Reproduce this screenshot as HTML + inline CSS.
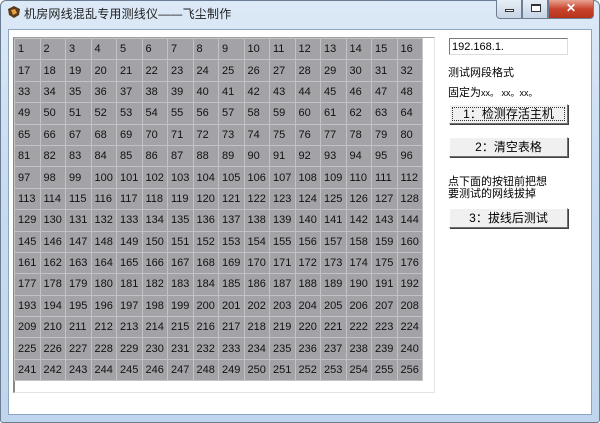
<!DOCTYPE html>
<html><head><meta charset="utf-8"><style>
*{margin:0;padding:0;box-sizing:border-box}
body{width:600px;height:423px;overflow:hidden;background:#fff;font-family:"Liberation Sans","Noto Sans CJK SC",sans-serif;position:relative}
.frame{position:absolute;left:0;top:0;width:600px;height:423px;background:linear-gradient(#dce9f7,#c9dcf1 40%,#c0d6ee);border:1px solid #6b7d92;border-radius:6px 6px 3px 3px}
.title{position:absolute;left:24px;top:5px;font-size:12px;color:#1e1e1e;letter-spacing:0.2px}
.client{position:absolute;left:8px;top:29px;width:584px;height:386px;background:#fff;border:1px solid #8fa6bf}
.btns{position:absolute;right:6px;top:0;height:19px;display:flex}
.b{height:19px;border:1px solid #6e7e93;border-top:none;background:linear-gradient(#e8eef6,#c7d5e6);position:relative}
.cls{background:linear-gradient(#e8a393,#c8442c 50%,#b6321c);width:46px;border-radius:0 0 4px 0;color:#fff;font-weight:bold;font-size:12px;text-align:center;line-height:17px}
.panel{position:absolute;left:13px;top:37px;width:422px;height:356px;border-left:2px solid #8a8a8a;border-top:1px solid #a0a0a0;border-bottom:1px solid #e4e4e4;border-right:1px solid #e4e4e4}
table{position:absolute;left:14px;top:38px;border-collapse:collapse;width:409px;height:343px;background:#a3a2a6}
td{border:1px solid #c3c3c6;font-size:11px;color:#111;padding:0 0 0 3px;vertical-align:middle;width:25.5px;height:21.4px}
.t{position:absolute;font-size:11px;color:#000}
.inp{position:absolute;left:449px;top:38px;width:119px;height:17px;border:1px solid #7a7a7a;border-right-color:#ddd;border-bottom-color:#ddd;font-size:11px;padding:2px 2px;color:#000}
.btn{position:absolute;left:449px;width:119px;height:20px;border:1px solid #707070;border-left-color:#fff;border-top-color:#fff;box-shadow:1px 1px 0 #404040;background:#f0f0f0;font-size:12px;text-align:center;line-height:18px}
</style></head><body>
<div class="frame"></div>
<svg style="position:absolute;left:6px;top:5px" width="16" height="14"><path d="M2 4 L8 1 L14 4 L13 10 L8 13 L3 10Z" fill="#5a3a1a"/><path d="M5 5 L9 4 L11 8 L7 10Z" fill="#e8a040"/></svg>
<div class="title">机房网线混乱专用测线仪——飞尘制作</div>
<div class="btns"><div class="b" style="width:26px;border-radius:0 0 0 4px"><div style="position:absolute;left:8px;top:9px;width:9px;height:3px;border:1px solid #333;background:#fff"></div></div><div class="b" style="width:26px"><div style="position:absolute;left:8px;top:4px;width:10px;height:8px;border:1px solid #333;border-top-width:2px;background:#fff"></div></div><div class="b cls">✕</div></div>
<div class="client"></div>
<div class="panel"></div>
<table>
<tbody id="g"></tbody>
</table>
<div class="inp">192.168.1.</div>
<div class="t" style="left:448px;top:64px">测试网段格式</div>
<div class="t" style="left:448px;top:84px">固定为<span style="font-size:9px">xx。 xx。xx。</span></div>
<div class="btn" style="top:104px;outline:1px dotted #333;outline-offset:-4px">1：检测存活主机</div>
<div class="btn" style="top:137px">2：清空表格</div>
<div class="t" style="left:448px;top:176px;line-height:12px">点下面的按钮前把想<br>要测试的网线拔掉</div>
<div class="btn" style="top:208px">3：拔线后测试</div>
<script>
var h='';for(var r=0;r<16;r++){h+='<tr>';for(var c=1;c<=16;c++)h+='<td>'+(r*16+c)+'</td>';h+='</tr>';}
document.getElementById('g').innerHTML=h;
</script>
</body></html>
